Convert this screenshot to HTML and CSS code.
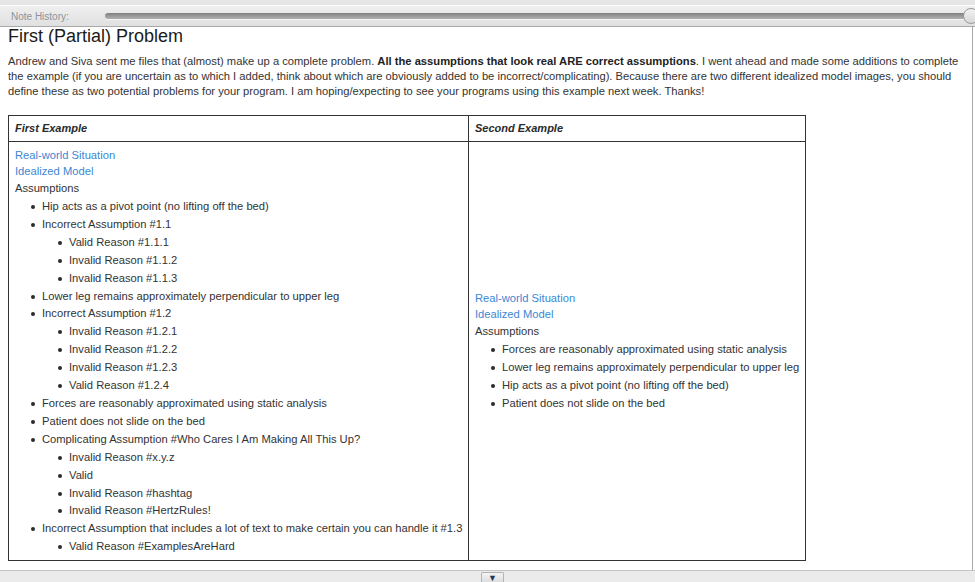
FILE: index.html
```html
<!DOCTYPE html>
<html>
<head>
<meta charset="utf-8">
<link rel="stylesheet" href="styles.css">
</head>
<body>
<div class="app">
  <div class="topstrip"></div>
  <div class="notebar">
    <span class="nb-label">Note History:</span>
    <div class="track"><span class="handle"></span></div>
  </div>
  <main class="main">
    <h1 class="title">First (Partial) Problem</h1>
    <p class="intro">Andrew and Siva sent me files that (almost) make up a complete problem. <b>All the assumptions that look real ARE correct assumptions</b>. I went ahead and made some additions to complete the example (if you are uncertain as to which I added, think about which are obviously added to be incorrect/complicating). Because there are two different idealized model images, you should define these as two potential problems for your program. I am hoping/expecting to see your programs using this example next week. Thanks!</p>
    <table class="examples">
      <thead>
        <tr>
          <th class="col1">First Example</th>
          <th class="col2">Second Example</th>
        </tr>
      </thead>
      <tbody>
        <tr>
          <td>
            <div class="link">Real-world Situation</div>
            <div class="link">Idealized Model</div>
            <div class="label">Assumptions</div>
            <ul class="lst">
              <li>Hip acts as a pivot point (no lifting off the bed)</li>
              <li>Incorrect Assumption #1.1
                <ul class="lst">
                  <li>Valid Reason #1.1.1</li>
                  <li>Invalid Reason #1.1.2</li>
                  <li>Invalid Reason #1.1.3</li>
                </ul>
              </li>
              <li>Lower leg remains approximately perpendicular to upper leg</li>
              <li>Incorrect Assumption #1.2
                <ul class="lst">
                  <li>Invalid Reason #1.2.1</li>
                  <li>Invalid Reason #1.2.2</li>
                  <li>Invalid Reason #1.2.3</li>
                  <li>Valid Reason #1.2.4</li>
                </ul>
              </li>
              <li>Forces are reasonably approximated using static analysis</li>
              <li>Patient does not slide on the bed</li>
              <li>Complicating Assumption #Who Cares I Am Making All This Up?
                <ul class="lst">
                  <li>Invalid Reason #x.y.z</li>
                  <li>Valid</li>
                  <li>Invalid Reason #hashtag</li>
                  <li>Invalid Reason #HertzRules!</li>
                </ul>
              </li>
              <li>Incorrect Assumption that includes a lot of text to make certain you can handle it #1.3
                <ul class="lst">
                  <li>Valid Reason #ExamplesAreHard</li>
                </ul>
              </li>
            </ul>
          </td>
          <td>
            <div class="link">Real-world Situation</div>
            <div class="link">Idealized Model</div>
            <div class="label">Assumptions</div>
            <ul class="lst">
              <li>Forces are reasonably approximated using static analysis</li>
              <li>Lower leg remains approximately perpendicular to upper leg</li>
              <li>Hip acts as a pivot point (no lifting off the bed)</li>
              <li>Patient does not slide on the bed</li>
            </ul>
          </td>
        </tr>
      </tbody>
    </table>
  </main>
  <div class="bottombar">
    <span class="toggle">&#9660;</span>
  </div>
</div>
</body>
</html>
```
FILE: styles.css
```css
html, body {
  margin: 0;
  padding: 0;
  background: #ffffff;
}
body {
  font-family: "Liberation Sans", Arial, sans-serif;
  font-size: 11.2px;
  color: #333333;
}
.app {
  width: 975px;
  height: 582px;
  display: flex;
  flex-direction: column;
  overflow: hidden;
}
.topstrip {
  height: 5px;
  background: #e6e6e6;
  border-bottom: 1px solid #fbfbfb;
  flex: none;
}
.notebar {
  height: 20px;
  flex: none;
  display: flex;
  align-items: center;
  padding-left: 11px;
  background: linear-gradient(#efefef, #e0e0e0);
  border-bottom: 1px solid #a9a9a9;
}
.nb-label {
  color: #8c939c;
  font-size: 10px;
}
.track {
  position: relative;
  flex: 1;
  height: 6px;
  margin-left: 36px;
  margin-top: -1px;
  border-radius: 3px;
  background: linear-gradient(#7f7f7f, #9a9a9a 50%, #b2b2b2);
  box-shadow: 0 1px 0 #f4f4f4;
}
.handle {
  position: absolute;
  left: 858px;
  top: -5px;
  width: 14px;
  height: 14px;
  border-radius: 50%;
  border: 1px solid #9a9a9a;
  background: linear-gradient(#f2f2f2, #d8d8d8);
}
.main {
  flex: 1;
  min-height: 0;
  overflow: hidden;
  padding: 0 8px;
  width: 956px;
  border-right: 1px solid #a9a9a9;
  background: #ffffff;
}
.title {
  margin: 0;
  font-size: 18px;
  font-weight: normal;
  line-height: 19px;
  color: #1a1a1a;
}
.intro {
  margin: 8px 0 0 0;
  line-height: 15px;
}
.intro b {
  color: #222;
}
.examples {
  margin-top: 16px;
  border-collapse: collapse;
  table-layout: fixed;
  width: 798px;
}
.examples th,
.examples td {
  border: 1px solid #333333;
  padding: 6px;
  text-align: left;
  white-space: nowrap;
}
.examples th {
  font-weight: bold;
  font-style: italic;
  font-size: 11px;
  line-height: 13px;
  color: #2a2a2a;
}
.examples th.col1 {
  width: 447px;
}
.examples td {
  vertical-align: middle;
  padding-top: 5px;
  padding-bottom: 4px;
}
.link {
  color: #3b88d4;
  line-height: 16px;
}
.label {
  line-height: 19px;
}
.lst {
  margin: 0;
  padding-left: 27px;
  list-style: none;
}
.lst li {
  position: relative;
  line-height: 17.9px;
}
.lst li::before {
  content: "";
  position: absolute;
  left: -11px;
  top: 7px;
  width: 4px;
  height: 4px;
  border-radius: 50%;
  background: #2a2a2a;
}
.bottombar {
  height: 11px;
  flex: none;
  border-top: 1px solid #c4c4c4;
  background: #ebebeb;
  display: flex;
  justify-content: center;
  align-items: flex-end;
}
.toggle {
  width: 21px;
  height: 9px;
  margin-left: 10px;
  border: 1px solid #b4b4b4;
  border-bottom: none;
  border-radius: 2px 2px 0 0;
  background: linear-gradient(#f4f4f4, #dddddd);
  color: #24365a;
  font-size: 9px;
  line-height: 10px;
  text-align: center;
}
```
